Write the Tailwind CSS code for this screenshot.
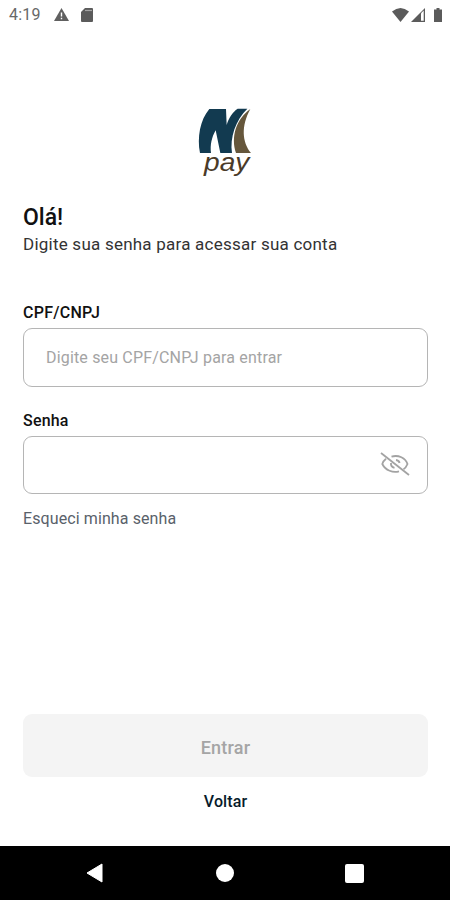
<!DOCTYPE html>
<html lang="pt-BR">
<head>
<meta charset="utf-8">
<title>M pay</title>
<script src="https://cdn.jsdelivr.net/npm/@tailwindcss/browser@4"></script>
</head>
<body class="bg-white">
<div class="w-[450px] h-[900px] flex flex-col overflow-hidden bg-white font-[Roboto,sans-serif] text-[#111]">
  <header class="h-[30px] shrink-0 flex items-center justify-between pl-[9px] pr-[8px] text-[#686868]">
    <div class="flex items-center -mt-px">
      <span class="w-[45px] text-[16px] leading-none tracking-[0.2px]">4:19</span>
      <svg class="w-[15px] h-[13px]" viewBox="0 0 15 13"><path d="M7.500 0L15 13H0Z" fill="#606060"/><path d="M7.500 4.500v4M7.500 9.700v1.500" stroke="#fff" stroke-width="1.400"/></svg>
      <svg class="ml-[12px] w-[12px] h-[14px]" viewBox="0 0 12 14"><path d="M4 0h7q1 0 1 1v12q0 1-1 1H1q-1 0-1-1V4Z" fill="#5b5b5b"/><path d="M4 2.500h7" stroke="#a5a5a5" stroke-width="1.200"/></svg>
    </div>
    <div class="flex items-center -mt-px">
      <svg class="w-[17px] h-[14px]" viewBox="0 0 17 14"><path d="M0 3.500Q8.500-3.500 17 3.500L8.500 14Z" fill="#5b5b5b"/></svg>
      <svg class="ml-[2px] w-[14px] h-[14px]" viewBox="0 0 14 14"><path d="M14 0V14H0Z" fill="#5b5b5b"/><path d="M10 5.300l2.700-2.700V12.700H10Z" fill="#fff"/></svg>
      <svg class="ml-[9px] w-[8px] h-[14px]" viewBox="0 0 8 14"><path d="M2.500 0h3v1.500h2.500V14H0V1.500h2.500Z" fill="#5b5b5b"/></svg>
    </div>
  </header>

  <main class="flex-1 flex flex-col pl-[23px] pr-[22px]">
    <div class="mt-[70px] flex justify-center pr-px">
      <div class="w-[70px] h-[84px]">
        <svg class="w-[70px] h-[84px]" viewBox="0 0 210 252" role="img" aria-label="M pay">
          <path d="M58 27H108L110 75C116 54 128 36 143 26H172C137 60 119 112 126 159H91L77 91C65 112 60 135 63 159H30C21 113 30 60 58 27Z" fill="#123a50"/>
          <path d="M181 27C138 58 122 111 138 159H183C156 126 153 78 181 27Z" fill="#66573c"/>
          <text x="42" y="214" font-family="Liberation Sans, sans-serif" font-style="italic" font-size="80" textLength="136" lengthAdjust="spacingAndGlyphs" fill="#4a3a28">pay</text>
        </svg>
      </div>
    </div>
    <h1 class="mt-[21px] h-[25px] leading-[26px] text-[23px] font-medium">Olá!</h1>
    <p class="h-[28px] leading-[28px] text-[17px] tracking-[0.23px] text-[#333] whitespace-nowrap">Digite sua senha para acessar sua conta</p>

    <label for="cpf" class="mt-[45px] h-[20px] leading-[20px] text-[16px] tracking-[0.25px] font-medium">CPF/CNPJ</label>
    <input id="cpf" placeholder="Digite seu CPF/CNPJ para entrar" class="mt-[5px] h-[59px] w-full rounded-[9px] border border-[#b5b5b5] px-[22px] text-[16px] tracking-[0.17px] placeholder:text-[#a4a4a4] outline-none">

    <label for="senha" class="mt-[24px] h-[20px] leading-[20px] text-[16px] tracking-[0.2px] font-medium">Senha</label>
    <div class="mt-[5px] h-[58px] w-full flex items-center rounded-[9px] border border-[#b5b5b5] pl-[22px] pr-[17px]">
      <input id="senha" type="password" class="flex-1 min-w-0 outline-none">
      <svg class="w-[30px] h-[26px] -mt-[3px]" viewBox="0 0 30 26" fill="none" stroke="#a3a3a3" stroke-width="1.800">
        <path d="M1 2L29 24"/>
        <path d="M11.500 5.600C18.500 3.600 25.500 7 27.500 13C26.500 15.500 25.500 17 23.500 18.200M6 7.800C4.500 9 3 10.700 2.300 13C5.500 19.500 13 22 19 20.300"/>
        <path d="M16 9C18 9.300 19.300 10.500 19.600 12M11 12C10.700 14.500 12 16.300 14.500 16.800"/>
      </svg>
    </div>
    <a class="mt-[15px] h-[20px] leading-[20px] text-[16px] tracking-[0.1px] text-[#59616a]">Esqueci minha senha</a>

    <button class="mt-[185px] h-[63px] w-full rounded-[9px] bg-[#f4f4f4] pt-[3px] text-[18px] tracking-[0.2px] font-medium text-[#a5a5a5]">Entrar</button>
    <a class="mt-[15px] h-[20px] leading-[20px] text-center text-[16px] tracking-[0.1px] font-medium text-[#071b2b]">Voltar</a>
  </main>

  <nav class="h-[54px] shrink-0 flex items-center justify-between bg-black px-[86px]">
    <svg class="w-[17px] h-[20px]" viewBox="0 0 17 20"><path d="M16 1V19L1 10Z" fill="#fff" stroke="#fff" stroke-linejoin="round"/></svg>
    <div class="ml-[2px] w-[18px] h-[18px] rounded-full bg-white"></div>
    <div class="w-[19px] h-[19px] rounded-[2px] bg-white"></div>
  </nav>
</div>
</body>
</html>
